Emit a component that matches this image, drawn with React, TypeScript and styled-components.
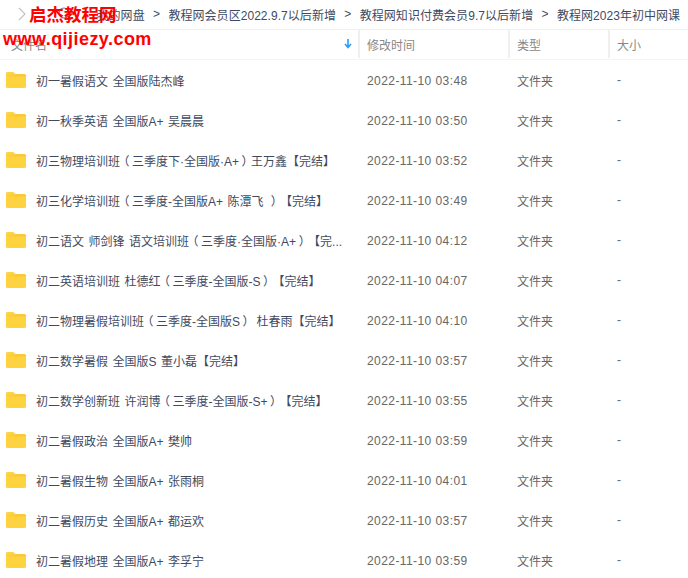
import React from 'react'
import styled, { createGlobalStyle } from 'styled-components'

const GlobalStyle = createGlobalStyle`
  html, body {
    margin: 0;
    padding: 0;
    background: #fff;
    overflow: hidden;
  }
  body {
    font-family: "Liberation Sans", "Noto Sans CJK SC", sans-serif;
    text-spacing-trim: space-all;
  }
`

const crumbs = [
  '我的网盘',
  '教程网会员区2022.9.7以后新增',
  '教程网知识付费会员9.7以后新增',
  '教程网2023年初中网课',
]

const rows = [
  ['初一暑假语文 全国版陆杰峰', '2022-11-10 03:48'],
  ['初一秋季英语 全国版A+ 吴晨晨', '2022-11-10 03:50'],
  ['初三物理培训班（三季度下·全国版·A+）王万鑫【完结】', '2022-11-10 03:52'],
  ['初三化学培训班（三季度-全国版A+ 陈潭飞 ）【完结】', '2022-11-10 03:49'],
  ['初二语文 师剑锋 语文培训班（三季度·全国版·A+）【完...', '2022-11-10 04:12'],
  ['初二英语培训班 杜德红（三季度-全国版-S）【完结】', '2022-11-10 04:07'],
  ['初二物理暑假培训班（三季度-全国版S） 杜春雨【完结】', '2022-11-10 04:10'],
  ['初二数学暑假 全国版S 董小磊【完结】', '2022-11-10 03:57'],
  ['初二数学创新班 许润博（三季度-全国版-S+）【完结】', '2022-11-10 03:55'],
  ['初二暑假政治 全国版A+ 樊帅', '2022-11-10 03:59'],
  ['初二暑假生物 全国版A+ 张雨桐', '2022-11-10 04:01'],
  ['初二暑假历史 全国版A+ 都运欢', '2022-11-10 03:57'],
  ['初二暑假地理 全国版A+ 李孚宁', '2022-11-10 03:59'],
]

// the parens sit in the middle of their em box in the original font
function renderName(name: string) {
  return name
    .split(/([（）])/)
    .map((part, i) =>
      part === '（' || part === '）' ? <Paren key={i}>{part}</Paren> : part,
    )
}

export default function App() {
  return (
    <Page>
      <GlobalStyle />
      <TopBar>
        <BackIcon />
        <SearchIcon />
        <Divider />
        <Crumbs>
          {crumbs.map((c, i) => (
            <React.Fragment key={c}>
              {i > 0 && <CrumbSep>&gt;</CrumbSep>}
              <span>{c}</span>
            </React.Fragment>
          ))}
        </Crumbs>
      </TopBar>
      <HeaderRow>
        <NameHead>
          文件名
          <SortArrow />
        </NameHead>
        <TimeHead>修改时间</TimeHead>
        <TypeHead>类型</TypeHead>
        <SizeHead>大小</SizeHead>
      </HeaderRow>
      {rows.map(([name, time]) => (
        <Row key={name}>
          <NameCell>
            <FolderIcon />
            <FileName>{renderName(name)}</FileName>
          </NameCell>
          <TimeCell>{time}</TimeCell>
          <TypeCell>文件夹</TypeCell>
          <SizeCell>-</SizeCell>
        </Row>
      ))}
      <Watermark>
        <WatermarkTitle>启杰教程网</WatermarkTitle>
        <WatermarkUrl>www.qijiezy.com</WatermarkUrl>
      </Watermark>
    </Page>
  )
}

function BackIcon() {
  return (
    <BackSvg width="8" height="14" viewBox="0 0 8 14">
      <path d="M1 1l6 6-6 6" fill="none" stroke="#c4c4c4" strokeWidth="1.2" />
    </BackSvg>
  )
}

function SearchIcon() {
  return (
    <SearchSvg width="14" height="14" viewBox="0 0 14 14">
      <circle cx="6" cy="6" r="5" fill="none" stroke="#777" strokeWidth="1.2" />
      <path d="M10 10l3 3" stroke="#777" strokeWidth="1.2" />
    </SearchSvg>
  )
}

function SortArrow() {
  return (
    <ArrowSvg width="8" height="10" viewBox="0 0 8 10">
      <path d="M4 0v8M1 5l3 3.500L7 5" fill="none" stroke="#2a9df4" strokeWidth="1.6" />
    </ArrowSvg>
  )
}

function FolderIcon() {
  return (
    <FolderSvg width="20" height="16" viewBox="0 0 20 16">
      <path
        d="M1.5 0h5.2c.5 0 .9.2 1.2.5L9.6 2.2h8.9c.8 0 1.5.7 1.5 1.5v10.8c0 .8-.7 1.5-1.5 1.500h-17C.7 16 0 15.300 0 14.500V1.500C0 .7.7 0 1.500 0z"
        fill="#ffd23f"
      />
      <path d="M0 4.200h20V3.700c0-.8-.7-1.500-1.500-1.500H9.600L8.900 3z" fill="#fbc52e" />
    </FolderSvg>
  )
}

const Page = styled.div`
  position: relative;
  width: 688px;
  height: 578px;
  overflow: hidden;
  background: #fff;
  color: #666;
  font-size: 12px;
`

const TopBar = styled.div`
  display: flex;
  align-items: center;
  box-sizing: border-box;
  height: 30px;
  padding: 0 0 1px 18px;
  border-bottom: 1px solid #f0f0f0;
`

const BackSvg = styled.svg`
  flex-shrink: 0;
`

const SearchSvg = styled.svg`
  flex-shrink: 0;
  margin-left: 32px;
`

const Divider = styled.div`
  flex-shrink: 0;
  width: 1px;
  height: 20px;
  margin-left: 12px;
  background: #eee;
`

const Crumbs = styled.div`
  display: flex;
  align-items: center;
  margin-left: 11.5px;
  color: #3f4a60;
  font-size: 12px;
  letter-spacing: 0.05px;
  white-space: nowrap;
`

const CrumbSep = styled.span`
  width: 23.7px;
  text-align: center;
`

const HeaderRow = styled.div`
  display: grid;
  grid-template-columns: 358px 150px 100px 80px;
  box-sizing: border-box;
  height: 30px;
  padding-bottom: 1px;
  border-bottom: 1px solid #f5f5f5;
  color: #888;
`

const HeadCell = styled.div`
  display: flex;
  align-items: center;
  box-sizing: border-box;
  padding-left: 7px;
  border-left: 2px solid #f0f0f0;
`

const NameHead = styled(HeadCell)`
  justify-content: space-between;
  padding: 0 6px 0 11px;
  border-left: 0;
`

const TimeHead = styled(HeadCell)``
const TypeHead = styled(HeadCell)``
const SizeHead = styled(HeadCell)``

const ArrowSvg = styled.svg`
  flex-shrink: 0;
`

const Row = styled.div`
  display: grid;
  grid-template-columns: 359px 150px 100px 79px;
  align-items: center;
  height: 40px;
`

const NameCell = styled.div`
  display: flex;
  align-items: center;
  padding-left: 6px;
`

const FolderSvg = styled.svg`
  flex-shrink: 0;
  margin-top: -1px;
`

const FileName = styled.span`
  margin-left: 10px;
  color: #3f4a60;
  word-spacing: 1.2px;
  white-space: nowrap;
`

const Paren = styled.span`
  display: inline-block;
  width: 12px;
  text-align: center;
  font-feature-settings: 'palt';
`

const TimeCell = styled.div`
  padding: 1px 0 0 8px;
  letter-spacing: 0.42px;
`

const TypeCell = styled.div`
  padding-left: 8px;
`

const SizeCell = styled.div`
  padding-left: 8px;
`

const Watermark = styled.div`
  position: absolute;
  left: 3px;
  top: 4px;
  color: #f00;
  font-weight: 700;
  white-space: nowrap;
`

const WatermarkTitle = styled.div`
  margin-left: 26px;
  font-size: 17.5px;
  line-height: 22px;
`

const WatermarkUrl = styled.div`
  margin-top: 2px;
  font-size: 18px;
  line-height: 22px;
  letter-spacing: 0.45px;
`
